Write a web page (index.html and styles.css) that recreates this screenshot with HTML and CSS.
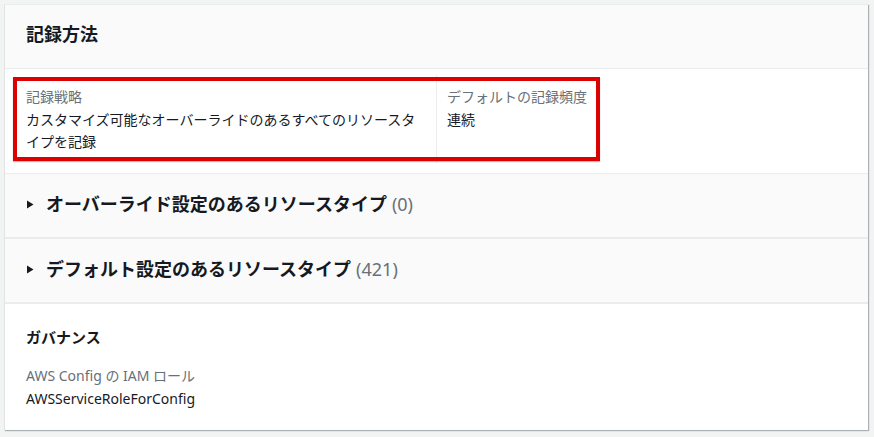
FILE: index.html
```html
<!DOCTYPE html>
<html lang="ja">
<head>
<meta charset="utf-8">
<link rel="stylesheet" href="styles.css">
</head>
<body>
<div class="card">
  <div class="card-header">
    <h2 class="title">記録方法</h2>
  </div>
  <div class="card-body">
    <div class="kv-grid">
      <div class="kv-col">
        <div class="kv-label">記録戦略</div>
        <div class="kv-value">カスタマイズ可能なオーバーライドのあるすべてのリソースタイプを記録</div>
      </div>
      <div class="kv-col kv-col-divided">
        <div class="kv-label">デフォルトの記録頻度</div>
        <div class="kv-value">連続</div>
      </div>
    </div>
    <div class="highlight"></div>
  </div>
  <div class="expander">
    <svg class="caret" width="8" height="9" viewBox="0 0 8 9"><polygon points="1,0.5 7.5,4.5 1,8.5" fill="#16191f"/></svg>
    <span class="expander-title">オーバーライド設定のあるリソースタイプ</span>
    <span class="counter">(0)</span>
  </div>
  <div class="expander">
    <svg class="caret" width="8" height="9" viewBox="0 0 8 9"><polygon points="1,0.5 7.5,4.5 1,8.5" fill="#16191f"/></svg>
    <span class="expander-title">デフォルト設定のあるリソースタイプ</span>
    <span class="counter">(421)</span>
  </div>
  <div class="governance">
    <h3 class="subtitle">ガバナンス</h3>
    <div class="kv-label">AWS Config の IAM ロール</div>
    <div class="kv-value">AWSServiceRoleForConfig</div>
  </div>
</div>
</body>
</html>
```
FILE: styles.css
```css
html, body {
  margin: 0;
  padding: 0;
}
body {
  background: #f2f3f3;
  padding: 4px 6px 6px 4px;
  font-family: "Noto Sans", "Noto Sans CJK JP", sans-serif;
  color: #16191f;
  font-size: 14px;
}
.card {
  width: 863px;
  background: #ffffff;
  border-top: 1px solid #eaeded;
  border-left: 1px solid #e1e4e4;
  box-shadow: 1px 1px 1px 0 rgba(0, 28, 36, 0.3);
}
.card-header {
  background: #fafafa;
  padding: 17px 21px 22px;
  border-bottom: 1px solid #eaeded;
}
.title {
  margin: 0;
  font-size: 18px;
  line-height: 24px;
  font-weight: 700;
}
.card-body {
  position: relative;
  padding: 6px 21px 10px;
  border-bottom: 1px solid #eaeded;
}
.kv-grid {
  display: grid;
  grid-template-columns: 410px 1fr;
}
.kv-col {
  padding: 11px 10px 10px 0;
}
.kv-col-divided {
  border-left: 1px solid #eaeded;
  padding-left: 10px;
}
.kv-label {
  color: #687078;
  line-height: 22px;
  margin-bottom: 1px;
}
.kv-value {
  line-height: 22px;
}
.highlight {
  position: absolute;
  left: 8px;
  top: 8px;
  width: 579px;
  height: 76px;
  border: 4px solid #dc0000;
  box-shadow: 0 1px 1px rgba(0, 0, 0, 0.25);
  pointer-events: none;
}
.expander {
  display: flex;
  align-items: center;
  background: #fafafa;
  padding: 18px 21px 21px 21px;
  border-bottom: 2px solid #eaeded;
}
.caret {
  display: block;
  margin-right: 12px;
}
.expander-title {
  font-size: 18px;
  line-height: 24px;
  font-weight: 700;
}
.counter {
  font-size: 18px;
  line-height: 24px;
  color: #687078;
  margin-left: 5px;
}
.governance {
  padding: 22px 21px 20px;
}
.subtitle {
  margin: 0 0 17px;
  font-size: 15px;
  line-height: 22px;
  font-weight: 700;
}
```
